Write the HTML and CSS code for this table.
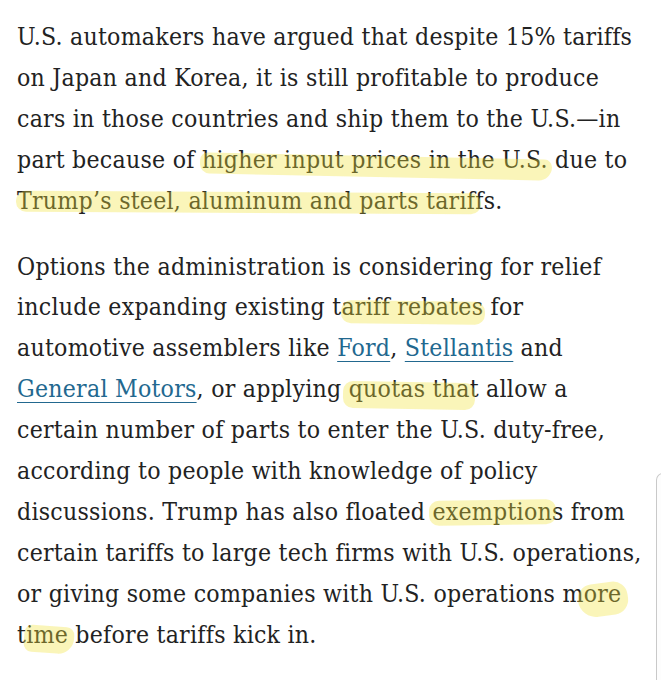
FILE: index.html
```html
<!DOCTYPE html>
<html lang="en">
<head>
<meta charset="utf-8">
<title>Article excerpt</title>
<link rel="stylesheet" href="styles.css">
</head>
<body>
<main class="article">
  <p class="para">U.S. automakers have argued that despite 15% tariffs<br>
on Japan and Korea, it is still profitable to produce<br>
cars in those countries and ship them to the U.S.—in<br>
part because of <mark class="hl hl-a">higher input prices in the U.S.</mark> due to<br>
<mark class="hl hl-b">Trump’s steel, aluminum and parts tarif</mark>fs.</p>
  <p class="para">Options the administration is considering for relief<br>
include expanding existing t<mark class="hl hl-c">ariff rebates</mark> for<br>
automotive assemblers like <a class="link" href="#">Ford</a>, <a class="link" href="#">Stellantis</a> and<br>
<a class="link" href="#">General Motors</a>, or applying <mark class="hl hl-d">quotas that</mark> allow a<br>
certain number of parts to enter the U.S. duty-free,<br>
according to people with knowledge of policy<br>
discussions. Trump has also floated <mark class="hl hl-e">exemption</mark>s from<br>
certain tariffs to large tech firms with U.S. operations,<br>
or giving some companies with U.S. operations m<mark class="hl hl-f">ore</mark><br>
t<mark class="hl hl-g">ime</mark> before tariffs kick in.</p>
</main>
<div class="edge-handle"></div>
</body>
</html>
```

FILE: styles.css
```css
html, body {
  margin: 0;
  padding: 0;
  background: #ffffff;
}

body {
  width: 661px;
  height: 680px;
  overflow: hidden;
  position: relative;
}

.article {
  padding: 17px 0 0 17px;
  font-family: "DejaVu Serif", "Liberation Serif", serif;
  font-stretch: condensed;
  font-size: 24.6px;
  letter-spacing: 0.25px;
  line-height: 40.9px;
  color: #222222;
}

.para {
  margin: 0 0 25px 0;
  white-space: nowrap;
}

.link {
  color: #22688f;
  text-decoration: underline;
  text-decoration-thickness: 1px;
  text-underline-offset: 5px;
}

.hl {
  position: relative;
  background: none;
  color: inherit;
}

.hl::after {
  content: "";
  position: absolute;
  left: -2px;
  right: -2px;
  top: 6px;
  bottom: 0;
  background: rgba(240, 228, 60, 0.36);
  border-radius: 10px;
  pointer-events: none;
}

.hl-a::after {
  top: 11px;
  bottom: -3px;
  right: -4px;
  transform: rotate(1.2deg);
  border-radius: 8px 8px 14px 10px;
}

.hl-b::after {
  top: 6px;
  bottom: 2px;
  left: -1px;
  right: -6px;
  transform: rotate(0.3deg);
}

.hl-c::after {
  top: 9px;
  bottom: -3px;
  left: 0;
  transform: rotate(0.6deg);
}

.hl-d::after {
  top: 8px;
  bottom: -6px;
  left: -6px;
  right: 4px;
  transform: rotate(1deg);
}

.hl-e::after {
  top: 3px;
  bottom: 1px;
  left: -3px;
  right: -4px;
  transform: rotate(-0.8deg);
}

.hl-f::after {
  left: -6px;
  right: -6px;
  top: 4px;
  bottom: -8px;
  border-radius: 16px 16px 16px 20px;
  transform: rotate(-8deg);
}

.hl-g::after {
  left: -2px;
  right: -6px;
  top: 6px;
  bottom: -4px;
  border-radius: 8px 8px 16px 8px;
  transform: rotate(4deg);
}

.edge-handle {
  position: absolute;
  left: 656px;
  top: 473px;
  width: 20px;
  height: 207px;
  border: 1px solid #c9c9c9;
  border-bottom: none;
  border-radius: 7px 7px 0 0;
  box-sizing: border-box;
  background: #fdfdfd;
}
```
